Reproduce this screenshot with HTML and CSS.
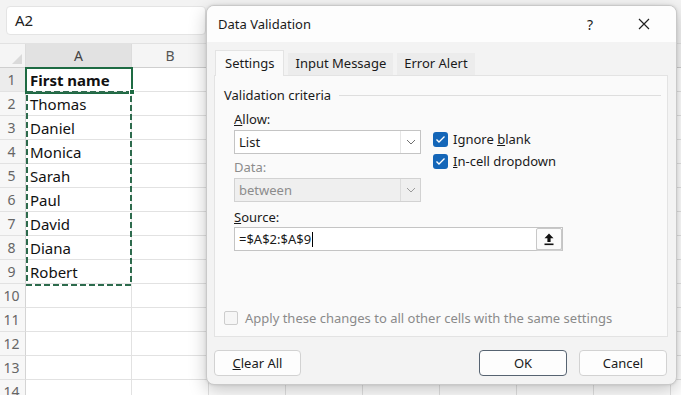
FILE: index.html
```html
<!DOCTYPE html>
<html>
<head>
<meta charset="utf-8">
<link rel="stylesheet" href="styles.css">
</head>
<body>
<div class="app">
  <div class="topbar"><div class="namebox">A2</div></div>
  <div class="sheet">
    <div class="corner"><span class="corner-tri"></span></div><div class="colh colh-sel">A</div><div class="colh">B</div><div class="colh">C</div><div class="colh">D</div><div class="colh">E</div><div class="colh">F</div><div class="colh">G</div><div class="colh">H</div><div class="colh"></div>
    <div class="rowh rowh-sel">1</div><div class="cell cell-bold">First name</div><div class="cell"></div><div class="cell"></div><div class="cell"></div><div class="cell"></div><div class="cell"></div><div class="cell"></div><div class="cell"></div><div class="cell"></div>
    <div class="rowh">2</div><div class="cell">Thomas</div><div class="cell"></div><div class="cell"></div><div class="cell"></div><div class="cell"></div><div class="cell"></div><div class="cell"></div><div class="cell"></div><div class="cell"></div>
    <div class="rowh">3</div><div class="cell">Daniel</div><div class="cell"></div><div class="cell"></div><div class="cell"></div><div class="cell"></div><div class="cell"></div><div class="cell"></div><div class="cell"></div><div class="cell"></div>
    <div class="rowh">4</div><div class="cell">Monica</div><div class="cell"></div><div class="cell"></div><div class="cell"></div><div class="cell"></div><div class="cell"></div><div class="cell"></div><div class="cell"></div><div class="cell"></div>
    <div class="rowh">5</div><div class="cell">Sarah</div><div class="cell"></div><div class="cell"></div><div class="cell"></div><div class="cell"></div><div class="cell"></div><div class="cell"></div><div class="cell"></div><div class="cell"></div>
    <div class="rowh">6</div><div class="cell">Paul</div><div class="cell"></div><div class="cell"></div><div class="cell"></div><div class="cell"></div><div class="cell"></div><div class="cell"></div><div class="cell"></div><div class="cell"></div>
    <div class="rowh">7</div><div class="cell">David</div><div class="cell"></div><div class="cell"></div><div class="cell"></div><div class="cell"></div><div class="cell"></div><div class="cell"></div><div class="cell"></div><div class="cell"></div>
    <div class="rowh">8</div><div class="cell">Diana</div><div class="cell"></div><div class="cell"></div><div class="cell"></div><div class="cell"></div><div class="cell"></div><div class="cell"></div><div class="cell"></div><div class="cell"></div>
    <div class="rowh">9</div><div class="cell">Robert</div><div class="cell"></div><div class="cell"></div><div class="cell"></div><div class="cell"></div><div class="cell"></div><div class="cell"></div><div class="cell"></div><div class="cell"></div>
    <div class="rowh">10</div><div class="cell"></div><div class="cell"></div><div class="cell"></div><div class="cell"></div><div class="cell"></div><div class="cell"></div><div class="cell"></div><div class="cell"></div><div class="cell"></div>
    <div class="rowh">11</div><div class="cell"></div><div class="cell"></div><div class="cell"></div><div class="cell"></div><div class="cell"></div><div class="cell"></div><div class="cell"></div><div class="cell"></div><div class="cell"></div>
    <div class="rowh">12</div><div class="cell"></div><div class="cell"></div><div class="cell"></div><div class="cell"></div><div class="cell"></div><div class="cell"></div><div class="cell"></div><div class="cell"></div><div class="cell"></div>
    <div class="rowh">13</div><div class="cell"></div><div class="cell"></div><div class="cell"></div><div class="cell"></div><div class="cell"></div><div class="cell"></div><div class="cell"></div><div class="cell"></div><div class="cell"></div>
    <div class="rowh">14</div><div class="cell"></div><div class="cell"></div><div class="cell"></div><div class="cell"></div><div class="cell"></div><div class="cell"></div><div class="cell"></div><div class="cell"></div><div class="cell"></div>
  </div>

  <div class="active-cell"></div>
  <svg class="ants" width="108" height="196" viewBox="0 0 108 196"><rect x="1" y="1" width="104" height="193" fill="none" stroke="#2d6b4d" stroke-width="2" stroke-dasharray="6 3"/></svg>
  <div class="fill-handle"></div>

  <div class="dialog">
    <div class="dlg-title">
      <span class="dlg-name">Data Validation</span>
      <span class="dlg-help">?</span>
      <span class="dlg-close"><svg width="12" height="12" viewBox="0 0 12 12"><path d="M1 1L11 11M11 1L1 11" stroke="#222" stroke-width="1.2" fill="none"/></svg></span>
    </div>
    <div class="dlg-body">
      <div class="tabs">
        <div class="tab tab-active">Settings</div>
        <div class="tab">Input Message</div>
        <div class="tab">Error Alert</div>
      </div>
      <div class="panel">
        <div class="group-title"><span>Validation criteria</span><span class="group-rule"></span></div>
        <div class="criteria">
          <div class="criteria-left">
            <div class="label"><u>A</u>llow:</div>
            <div class="combo">
              <span class="combo-val">List</span>
              <span class="combo-btn"><svg width="10" height="6" viewBox="0 0 10 6"><path d="M1 1L5 5L9 1" stroke="#707070" stroke-width="1" fill="none"/></svg></span>
            </div>
            <div class="label label-disabled">Data:</div>
            <div class="combo combo-disabled">
              <span class="combo-val">between</span>
              <span class="combo-btn"><svg width="10" height="6" viewBox="0 0 10 6"><path d="M1 1L5 5L9 1" stroke="#9a9a9a" stroke-width="1" fill="none"/></svg></span>
            </div>
          </div>
          <div class="criteria-right">
            <div class="check"><span class="box box-on"><svg width="11" height="9" viewBox="0 0 11 9"><path d="M1.5 4.5L4 7L9.5 1.5" stroke="#fff" stroke-width="1.4" fill="none"/></svg></span><span class="check-text">Ignore <u>b</u>lank</span></div>
            <div class="check"><span class="box box-on"><svg width="11" height="9" viewBox="0 0 11 9"><path d="M1.5 4.5L4 7L9.5 1.5" stroke="#fff" stroke-width="1.4" fill="none"/></svg></span><span class="check-text"><u>I</u>n-cell dropdown</span></div>
          </div>
        </div>
        <div class="label label-source"><u>S</u>ource:</div>
        <div class="source">
          <span class="source-val">=$A$2:$A$9<span class="caret"></span></span>
          <span class="ref-btn"><svg width="12" height="14" viewBox="0 0 12 14"><path d="M6 1.5L1.5 6.2H4.4V10H7.6V6.2H10.5Z" fill="#111"/><rect x="1.5" y="11.5" width="9" height="1.6" fill="#111"/></svg></span>
        </div>
        <div class="apply"><span class="box box-off"></span><span class="apply-text">Apply these changes to all other cells with the same settings</span></div>
      </div>
      <div class="buttons">
        <div class="btn"><u>C</u>lear All</div>
        <div class="btn-spacer"></div>
        <div class="btn btn-primary">OK</div>
        <div class="btn">Cancel</div>
      </div>
    </div>
  </div>
</div>
</body>
</html>
```

FILE: styles.css
```css
* { box-sizing: border-box; margin: 0; padding: 0; }
html, body { width: 681px; height: 395px; overflow: hidden; }
body { font-family: "Noto Sans", "Open Sans", sans-serif; background: #f3f3f3; color: #1f1f1f; }
.app { position: relative; width: 681px; height: 395px; overflow: hidden; }

.topbar { height: 44px; padding: 6px 0 0 6px; background: #f3f3f3; border-bottom: 1px solid #e2e2e2; }
.namebox { width: 200px; height: 29px; background: #fff; border: 1px solid #e4e4e4; border-radius: 4px; font-size: 15px; line-height: 27px; padding-left: 8px; color: #222; }

.sheet { display: grid; grid-template-columns: 26px 106px repeat(8, 77px); grid-template-rows: 24px; grid-auto-rows: 24px; background: #fff; width: 748px; }
.corner, .colh { background: #f5f5f5; border-right: 1px solid #dcdcdc; border-bottom: 1px solid #cfcfcf; font-size: 14px; color: #555; text-align: center; line-height: 23px; position: relative; }
.colh-sel { background: #e2e2e2; color: #444; border-bottom: 1px solid #b8b8b8; }
.corner-tri { position: absolute; right: 3px; bottom: 3px; width: 0; height: 0; border-left: 10px solid transparent; border-bottom: 10px solid #dadada; }
.rowh { background: #f7f7f7; border-right: 1px solid #d4d4d4; border-bottom: 1px solid #e2e2e2; font-size: 14px; color: #666; text-align: center; line-height: 24px; padding-right: 2px; }
.rowh-sel { background: #ececec; }
.cell { border-right: 1px solid #e2e2e2; border-bottom: 1px solid #e2e2e2; font-size: 15px; line-height: 24px; padding-left: 4px; color: #111; white-space: nowrap; overflow: hidden; }
.cell-bold { font-weight: 700; }

.active-cell { position: absolute; left: 25px; top: 67px; width: 108px; height: 27px; border: 2px solid #1e6b43; }
.ants { position: absolute; left: 26px; top: 91px; }
.fill-handle { position: absolute; left: 129px; top: 89px; width: 6px; height: 6px; background: #1e6b43; border: 1px solid #fff; }

.dialog { position: absolute; left: 206px; top: 5px; width: 471px; height: 380px; background: #f3f3f3; border: 1px solid #c9c9c9; border-radius: 8px; box-shadow: 0 6px 18px rgba(0,0,0,0.22), 0 0 3px rgba(0,0,0,0.12); font-size: 13px; color: #1a1a1a; overflow: hidden; display: flex; flex-direction: column; }
.dlg-title { height: 36px; background: #fdfdfd; display: flex; align-items: center; padding-left: 11px; }
.dlg-name { flex: 1; font-size: 13px; }
.dlg-help { width: 20px; text-align: center; font-size: 14px; margin-right: 34px; }
.dlg-close { width: 20px; display: flex; justify-content: center; margin-right: 22px; }

.dlg-body { flex: 1; padding: 8px 8px 0 7px; display: flex; flex-direction: column; }
.tabs { display: flex; align-items: flex-end; height: 25px; gap: 4px; padding-left: 1px; position: relative; z-index: 1; }
.tab { height: 22px; line-height: 21px; padding: 0 7px; background: #ececec; color: #1a1a1a; }
.tab-active { height: 26px; line-height: 24px; padding: 0 9px; background: #fafafa; border: 1px solid #e3e3e3; border-bottom: none; margin-bottom: -1px; }

.panel { height: 262px; background: #fafafa; border: 1px solid #e3e3e3; display: flex; flex-direction: column; padding: 10px 0 9px 0; }
.group-title { display: flex; align-items: center; padding-left: 9px; padding-right: 6px; line-height: 18px; }
.group-rule { flex: 1; height: 1px; background: #dedede; margin-left: 8px; }

.criteria { display: flex; padding-left: 19px; margin-top: 6px; }
.criteria-left { width: 187px; }
.label { line-height: 18px; }
.label-disabled { color: #8c8c8c; margin-top: 4px; }
.label-source { padding-left: 19px; margin-top: 6px; }
.combo { margin-top: 2px; height: 24px; background: #fff; border: 1px solid #c4c4c4; display: flex; }
.combo-val { flex: 1; line-height: 22px; padding-left: 4px; }
.combo-btn { width: 20px; border-left: 1px solid #e6e6e6; display: flex; align-items: center; justify-content: center; }
.combo-disabled { background: #efefef; border-color: #d2d2d2; color: #8c8c8c; }
.combo-disabled .combo-btn { border-left-color: #dcdcdc; }

.criteria-right { margin-left: 12px; padding-top: 18px; }
.check { display: flex; align-items: center; height: 22px; gap: 5px; }
.box { width: 15px; height: 15px; border-radius: 3px; display: flex; align-items: center; justify-content: center; flex: none; }
.box-on { background: #1466b8; }
.box-off { width: 14px; height: 14px; border: 1px solid #cdcdcd; background: #f6f6f6; border-radius: 2px; }

.source { margin: 1px 0 0 19px; width: 329px; height: 24px; background: #fff; border: 1px solid #c4c4c4; display: flex; align-items: center; }
.source-val { flex: 1; padding-left: 4px; line-height: 22px; display: flex; align-items: center; }
.caret { width: 1px; height: 15px; background: #000; margin-left: 1px; }
.ref-btn { width: 26px; height: 22px; border: 1px solid #c8c8c8; border-radius: 2px; background: #fbfbfb; display: flex; align-items: center; justify-content: center; box-shadow: 0 1px 0 #d0d0d0; }

.apply { margin-top: auto; display: flex; align-items: center; gap: 7px; padding-left: 9px; line-height: 18px; color: #8a8a8a; }

.buttons { display: flex; margin-top: 13px; height: 26px; gap: 12px; }
.btn { width: 87px; height: 26px; border: 1px solid #d2d2d2; border-radius: 4px; background: #fdfdfd; text-align: center; line-height: 24px; color: #1a1a1a; }
.btn-spacer { flex: 1; }
.btn-primary { width: 88px; border: 1px solid #566371; }
.buttons .btn:last-child { width: 88px; margin-right: 1px; }
```
